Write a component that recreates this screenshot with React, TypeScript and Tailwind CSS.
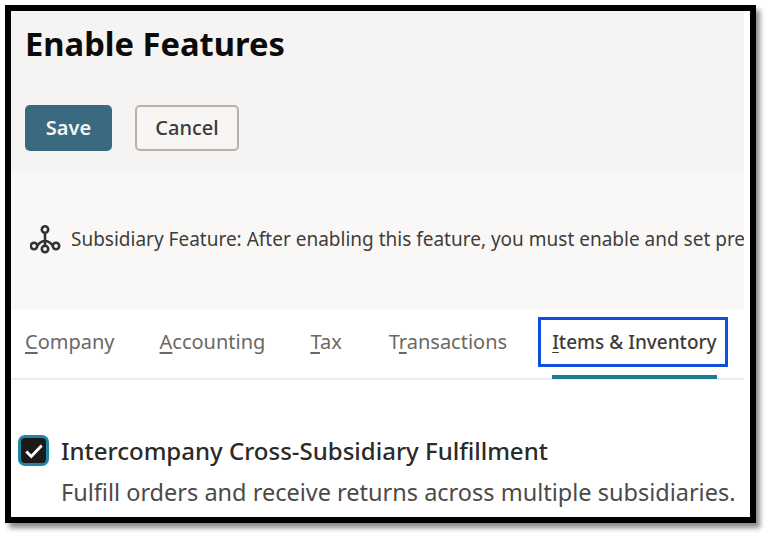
import React from "react";

const font = { fontFamily: '"Noto Sans", "Open Sans", sans-serif' };

function Tab({ first, rest, active }: { first: string; rest: string; active?: boolean }) {
  return (
    <div className={active ? "relative flex h-full items-center text-[#3f3c39] font-medium" : "flex h-full items-center text-[#6b6864]"}>
      <span className={active ? "pb-[4px] text-[19px] leading-none whitespace-nowrap" : "pb-[4px] text-[20px] leading-none whitespace-nowrap"}><span className="underline underline-offset-[3px]">{first}</span>{rest}</span>
      {active && <div className="absolute -left-[14px] -right-[11px] top-[7px] h-[50px] border-[3px] border-[#0f4fe0]" />}
      {active && <div className="absolute left-0 right-0 top-[65px] h-[4px] bg-[#1d7a94]" />}
    </div>
  );
}

export default function App() {
  return (
    <div style={font} className="h-[535px] w-[768px] overflow-hidden bg-white pl-[5px] pt-[5px]">
      <div className="h-[518px] w-[751px] overflow-hidden border-[6px] border-black bg-white shadow-[4px_5px_5px_rgba(0,0,0,0.45)]">
        <div className="w-[733px]">
          <div className="h-[162px] bg-[#f5f4f2] pl-[14px] pt-[11px]">
            <h1 className="text-[32.7px] font-bold leading-[43px] text-[#0b0b0b]">Enable Features</h1>
            <div className="mt-[40px] flex gap-[23px]">
              <button className="h-[46px] w-[87px] rounded-[5px] bg-[#3a6a80] text-[20px] font-semibold text-[#f4f4f2]">Save</button>
              <button className="h-[46px] w-[104px] rounded-[5px] border-2 border-[#b5b2ad] bg-[#f7f6f4] text-[20px] font-medium text-[#3c3a38]">Cancel</button>
            </div>
          </div>
          <div className="flex h-[137px] items-center gap-[10px] overflow-hidden bg-[#faf8f7] pb-[4px] pl-[19px]">
            <svg width="31" height="31" viewBox="0 0 31 31" fill="none" stroke="#33312f" strokeWidth="2.6" className="shrink-0">
              <circle cx="15" cy="5.5" r="3.2" />
              <circle cx="4" cy="22" r="3.2" />
              <circle cx="15" cy="25" r="3.2" />
              <circle cx="26" cy="22" r="3.2" />
              <path d="M15 8.5V22M7 22C9.5 18.5 12 17 15 17S20.5 18.5 23 22" />
            </svg>
            <span className="whitespace-nowrap text-[19px] text-[#3f3d3b]">Subsidiary Feature: After enabling this feature, you must enable and set pre</span>
          </div>
          <div className="flex h-[70px] items-center border-b-2 border-[#eeeded] pl-[14px]">
            <Tab first="C" rest="ompany" />
            <div className="w-[45px]" />
            <Tab first="A" rest="ccounting" />
            <div className="w-[45px]" />
            <Tab first="T" rest="ax" />
            <div className="w-[47px]" />
            <div className="flex h-full items-center text-[#6b6864]">
              <span className="whitespace-nowrap pb-[4px] text-[20px] leading-none">T<span className="underline underline-offset-[3px]">r</span>ansactions</span>
            </div>
            <div className="w-[45px]" />
            <Tab first="I" rest="tems &amp; Inventory" active />
          </div>
        </div>
        <div className="flex gap-[12px] pl-[7px] pt-[55px]">
          <div className="flex h-[31px] w-[31px] shrink-0 items-center justify-center rounded-[7px] border-[3px] border-[#1f86a6] bg-[#1b1a19]">
            <svg width="22" height="22" viewBox="0 0 20 20" fill="none" stroke="#ffffff" strokeWidth="2.6"><path d="M3 10.5l4.5 4.5L17 5" /></svg>
          </div>
          <div>
            <div className="text-[24px] font-medium leading-[31px] text-[#2b2a29] whitespace-nowrap">Intercompany Cross-Subsidiary Fulfillment</div>
            <div className="mt-[11px] text-[23.5px] leading-[30px] text-[#4c4a48] whitespace-nowrap">Fulfill orders and receive returns across multiple subsidiaries.</div>
          </div>
        </div>
      </div>
    </div>
  );
}
